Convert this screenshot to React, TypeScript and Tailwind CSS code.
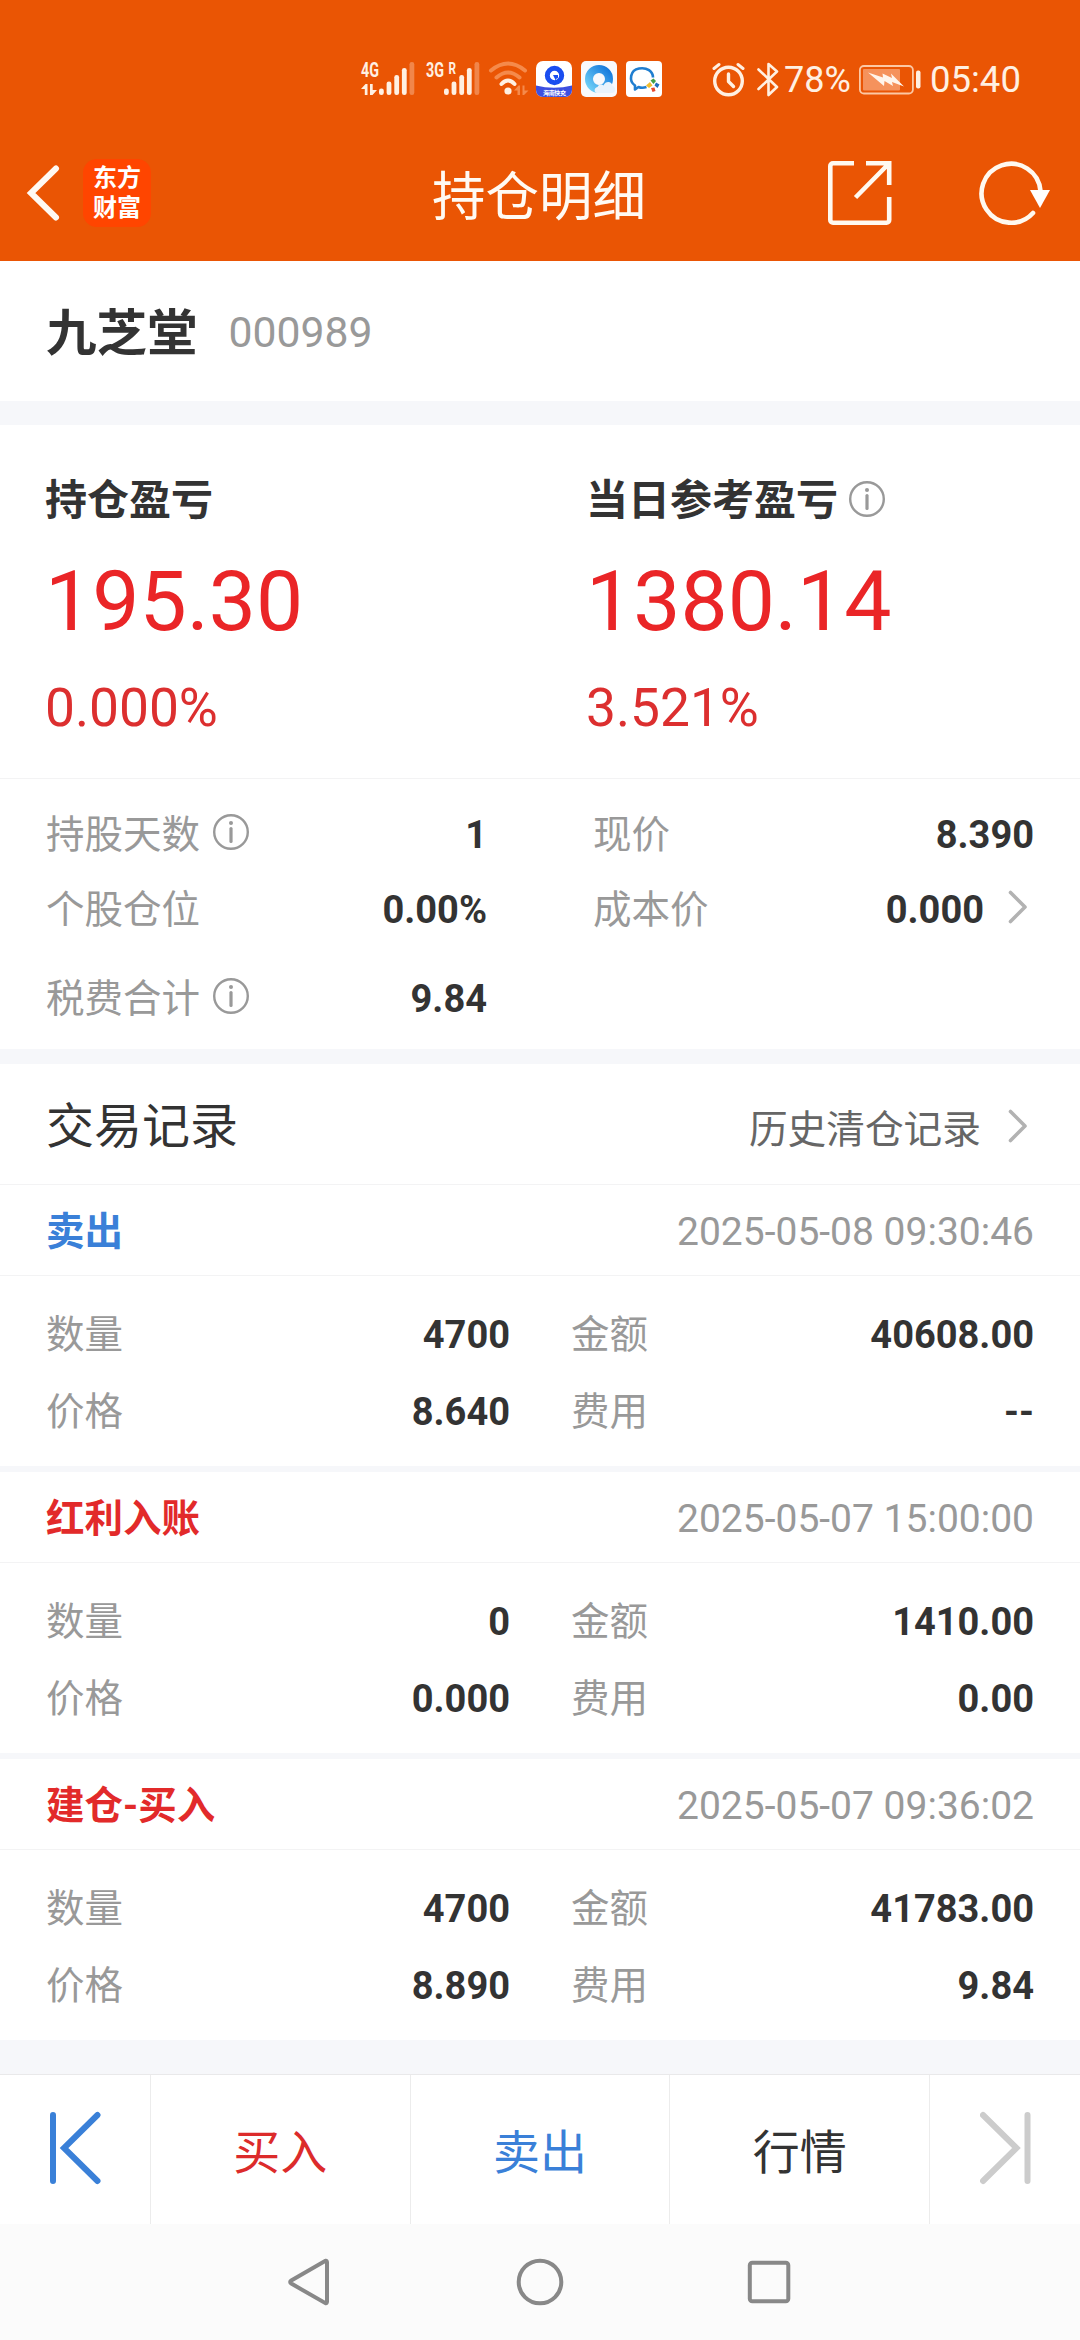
import React from 'react';

interface TradeRecord {
  id: number;
  type: string;
  color: string;
  time: string;
  quantity: string;
  amount: string;
  price: string;
  fee: string;
}

const records: TradeRecord[] = [
  {
    id: 1,
    type: '卖出',
    color: 'text-[#3a80d8]',
    time: '2025-05-08 09:30:46',
    quantity: '4700',
    amount: '40608.00',
    price: '8.640',
    fee: '--',
  },
  {
    id: 2,
    type: '红利入账',
    color: 'text-[#e22a2a]',
    time: '2025-05-07 15:00:00',
    quantity: '0',
    amount: '1410.00',
    price: '0.000',
    fee: '0.00',
  },
  {
    id: 3,
    type: '建仓-买入',
    color: 'text-[#e22a2a]',
    time: '2025-05-07 09:36:02',
    quantity: '4700',
    amount: '41783.00',
    price: '8.890',
    fee: '9.84',
  },
];

function InfoIcon() {
  return (
    <svg className="w-9 h-9 shrink-0" viewBox="0 0 36 36" fill="none">
      <circle cx="18" cy="18" r="16.8" stroke="#999" strokeWidth="2.4" />
      <circle cx="18" cy="9" r="2" fill="#999" />
      <path d="M18 14.5v13" stroke="#999" strokeWidth="3.2" strokeLinecap="round" />
    </svg>
  );
}

function ChevronRight() {
  return (
    <svg className="w-[20px] h-[34px] shrink-0" viewBox="0 0 20 34" fill="none">
      <path d="M2.5 2.5 17 17 2.5 31.5" stroke="#b2b2b2" strokeWidth="3.6" strokeLinecap="round" strokeLinejoin="round" />
    </svg>
  );
}

function SignalIcon({ label, roaming }: { label: string; roaming?: boolean }) {
  return (
    <svg className="w-[54px] h-9 shrink-0 overflow-visible" viewBox="0 0 54 36" fill="#fff0e2">
      <text x="0" y="16" fontSize="20.5" fontWeight="700" textLength="18" lengthAdjust="spacingAndGlyphs">{label}</text>
      {roaming ? (
        <text x="22.5" y="13" fontSize="16" fontWeight="700" textLength="7.5" lengthAdjust="spacingAndGlyphs">R</text>
      ) : (
        <path d="M0 28 4.500 23H6.500V34H3.800V28zM9 23h2.700v6H16L11.500 34H9z" />
      )}
      <rect x="18" y="27.5" width="4.8" height="6.5" rx="2.3" />
      <rect x="25.6" y="20.5" width="4.8" height="13.5" rx="2.3" />
      <rect x="33.3" y="14" width="4.8" height="20" rx="2.3" />
      <rect x="40.9" y="7" width="4.8" height="27" rx="2.3" />
      <rect x="48.5" y="1" width="4.8" height="33" rx="2.3" opacity="0.32" />
    </svg>
  );
}

function StatusBar() {
  return (
    <div className="flex items-center h-[36px] mt-[61px] text-[#fff0e2]">
      <div className="flex items-center pl-[361px]">
        <SignalIcon label="4G" />
        <div className="ml-[11px]">
          <SignalIcon label="3G" roaming />
        </div>
        <svg className="ml-[8px] w-[42px] h-9" viewBox="0 0 42 36" fill="none" strokeLinecap="round">
          <path d="M3 9.5Q20 -4.5 37 9.5" stroke="#f58a4b" strokeWidth="4" />
          <path d="M8.500 16.500Q20 6.500 31.500 16.500" stroke="#f58a4b" strokeWidth="4" />
          <path d="M13.500 23Q20 16 26.500 23" stroke="#fff0e2" strokeWidth="4" />
          <circle cx="20" cy="30" r="3.6" fill="#fff0e2" />
          <path d="M26 29.500 30.500 24.500H32V34H29.500V29.500zM34.500 24.500H36.500V29.500H40.500L36 34H34.500z" fill="#f58a4b" />
        </svg>
        <svg className="ml-[6px] w-9 h-9" viewBox="0 0 36 36">
          <clipPath id="appClip"><rect width="36" height="36" rx="7" /></clipPath>
          <g clipPath="url(#appClip)">
            <rect width="36" height="36" fill="#fff" />
            <path d="M0 24.500Q18 29 36 24.500V36H0z" fill="#3d4fe0" />
            <circle cx="18.5" cy="14.5" r="7.2" fill="none" stroke="#1a4df0" strokeWidth="5" />
            <path d="M17 14h5v3l-2 1v2z" fill="#1a4df0" />
            <text x="7" y="33.6" fontSize="6" fontWeight="700" fill="#fff" textLength="23">海南快充</text>
          </g>
        </svg>
        <svg className="ml-[9px] w-9 h-9" viewBox="0 0 36 36">
          <defs>
            <linearGradient id="ring" x1="0" y1="1" x2="1" y2="0">
              <stop offset="0" stopColor="#6fd0f7" />
              <stop offset="1" stopColor="#1478dc" />
            </linearGradient>
          </defs>
          <rect width="36" height="36" rx="5" fill="#f8f9fc" />
          <circle cx="18" cy="18" r="10" fill="none" stroke="url(#ring)" strokeWidth="8" />
          <path d="M16 32c-3-.5-3.500-5 .5-6 1.500-3 4.500-3 6-1.500 2-5 8.500-4.500 9 .5 4 1 3.500 7-.5 7z" fill="#e9f3fc" />
        </svg>
        <svg className="ml-[9px] w-9 h-9" viewBox="0 0 36 36" fill="none">
          <rect width="36" height="36" rx="4" fill="#fff" />
          <path d="M20.500 26Q16 27.500 12.500 26L9 28.500V24.500C2.500 20 4 9 13 7.500c8-1.500 14 3 14 9" stroke="#1f7ed0" strokeWidth="2.6" strokeLinejoin="round" />
          <path d="M24.500 19.500 27.500 17.500 30 20 27.500 23z" fill="#43a047" />
          <path d="M30 21.500 33.500 23.500 31.500 27 28.500 24.500z" fill="#1f6ec0" />
          <path d="M25 27 28.500 26.500 29.500 30 26.500 31z" fill="#e64a2e" />
          <path d="M20 24.500 24 21 26.500 24.500 23 27z" fill="#f2bd2d" />
        </svg>
      </div>
      <svg className="ml-[50px] w-[34px] h-9" viewBox="0 0 34 36" fill="none" stroke="#fff0e2" strokeLinecap="round">
        <circle cx="16.5" cy="20" r="13.8" strokeWidth="3.4" />
        <path d="M16.500 13v7.500l5 5" strokeWidth="3.400" strokeLinejoin="round" />
        <path d="M2 7.500 7 3.500M31 7.500 26 3.500" strokeWidth="3" />
      </svg>
      <svg className="ml-[10px] w-[24px] h-9" viewBox="0 0 24 36" fill="none" stroke="#fff0e2" strokeWidth="2.6" strokeLinejoin="round" strokeLinecap="round">
        <path d="M2.500 8.500 21 26 12.500 34V3L21 10.500 2.500 28" />
      </svg>
      <span className="ml-[4px] text-[36px] leading-9 w-[66px] pt-[1px]">78%</span>
      <svg className="ml-[9px] w-[62px] h-9" viewBox="0 0 62 36" fill="none">
        <rect x="0.9" y="5" width="53" height="27.5" rx="4" stroke="#fcc8a4" strokeWidth="1.8" />
        <rect x="4" y="8" width="37" height="21.5" rx="1" fill="#f5925c" />
        <path d="M9 11.500 24 16.500 23.500 12.500 33 17 32 12.500 45 25.500 33 21 34 25 25.500 20 25 25z" fill="#fff5ec" />
        <rect x="57" y="9.500" width="4.500" height="18" rx="2" fill="#fff0e2" />
      </svg>
      <span className="ml-[9px] text-[36.5px] leading-9 pt-[1px]">05:40</span>
    </div>
  );
}

function NavHeader() {
  return (
    <header className="flex items-center h-[136px] mt-[28px]">
      <button className="ml-[26px]">
        <svg className="w-[34px] h-[58px]" viewBox="0 0 34 58" fill="none">
          <path d="M30 4.500 5 29 30 53.500" stroke="#fff9f2" strokeWidth="6" strokeLinecap="round" strokeLinejoin="miter" />
        </svg>
      </button>
      <div className="ml-[23px] w-[68px] h-[68px] rounded-[14px] bg-[#ff4500] pt-[2px] text-center text-white text-[24px] leading-[30px] font-bold font-['Noto_Sans_CJK_SC',sans-serif]">
        东方
        <br />
        财富
      </div>
      <h1 className="ml-[281px] mt-[9px] w-[216px] text-[53.5px] leading-[60px] text-[#fffaf3]">持仓明细</h1>
      <button className="ml-[180px]">
        <svg className="w-[64px] h-[64px]" viewBox="0 0 64 64" fill="none" stroke="#fff9f0" strokeWidth="4.6">
          <path d="M26 2.300H5a2.700 2.700 0 0 0-2.700 2.700V59a2.700 2.700 0 0 0 2.700 2.700H58.500a2.700 2.700 0 0 0 2.700-2.700V36" />
          <path d="M38 2.300H61.200V24M61 2.500 27.500 36.500" />
        </svg>
      </button>
      <button className="ml-[86px]">
        <svg className="w-[74px] h-[66px]" viewBox="0 0 74 66" fill="none">
          <path d="M55 53A29.500 29.500 0 1 1 62.500 31" stroke="#fff9f0" strokeWidth="4.600" strokeLinecap="round" />
          <path d="M52 30H72L62 48z" fill="#fff" />
        </svg>
      </button>
    </header>
  );
}

function RecordItem({ record }: { record: TradeRecord }) {
  return (
    <div>
      <div className="h-[91px] pt-[3px] px-[46px] flex items-center justify-between border-b border-[#f3f3f4]">
        <span className={`font-bold ${record.color}`}>{record.type}</span>
        <span className="text-[39px] text-[#999]">{record.time}</span>
      </div>
      <div className="h-[190px] pt-[20px]">
        <div className="h-[77px] flex items-center">
          <div className="w-[510px] pl-[46px] flex justify-between">
            <span className="text-[#999]">数量</span>
            <span className="text-[38px] font-bold">{record.quantity}</span>
          </div>
          <div className="flex-1 pl-[61px] pr-[46px] flex justify-between">
            <span className="text-[#999]">金额</span>
            <span className="text-[38px] font-bold">{record.amount}</span>
          </div>
        </div>
        <div className="h-[77px] flex items-center">
          <div className="w-[510px] pl-[46px] flex justify-between">
            <span className="text-[#999]">价格</span>
            <span className="text-[38px] font-bold">{record.price}</span>
          </div>
          <div className="flex-1 pl-[61px] pr-[46px] flex justify-between">
            <span className="text-[#999]">费用</span>
            <span className="text-[38px] font-bold">{record.fee}</span>
          </div>
        </div>
      </div>
    </div>
  );
}

export default function App() {
  return (
    <div className="w-[1080px] h-[2340px] flex flex-col bg-white overflow-hidden text-[#333] text-[38.5px] leading-[48px] font-['Roboto','Noto_Sans_CJK_SC',sans-serif]">
      {/* Status bar + title bar */}
      <div className="h-[261px] shrink-0 bg-[#ea5504] flow-root">
        <StatusBar />
        <NavHeader />
      </div>

      {/* Stock name */}
      <div className="h-[140px] shrink-0 pl-[46px] pt-[6px] flex items-center">
        <span className="text-[50.5px] font-bold leading-[60px]">九芝堂</span>
        <span className="ml-[31px] mb-[4px] text-[42.7px] text-[#999]">000989</span>
      </div>
      <div className="h-[24px] shrink-0 bg-[#f6f7fa]" />

      {/* Profit and loss */}
      <div className="h-[354px] shrink-0 pt-[46px] grid grid-cols-2 border-b border-[#f3f3f4]">
        <div className="pl-[45px]">
          <div className="h-[60px] flex items-center text-[42px] font-bold">持仓盈亏</div>
          <div className="mt-[21px] text-[84px] leading-[100px] text-[#ea2527]">195.30</div>
          <div className="mt-[26px] text-[53.3px] leading-[60px] text-[#dc2f2f]">0.000%</div>
        </div>
        <div className="pl-[46px]">
          <div className="h-[60px] flex items-center text-[42px] font-bold">
            当日参考盈亏
            <div className="ml-[11px] mb-[5px]">
              <InfoIcon />
            </div>
          </div>
          <div className="mt-[21px] text-[84px] leading-[100px] text-[#ea2527]">1380.14</div>
          <div className="mt-[26px] text-[53.3px] leading-[60px] text-[#dc2f2f]">3.521%</div>
        </div>
      </div>

      {/* Position details */}
      <div className="h-[270px] shrink-0 pt-[18px]">
        <div className="h-[75px] flex items-center">
          <div className="w-[487px] pl-[46px] flex items-center">
            <span className="text-[#999]">持股天数</span>
            <div className="ml-[13px] mb-[6px]">
              <InfoIcon />
            </div>
            <span className="ml-auto text-[38px] font-bold">1</span>
          </div>
          <div className="flex-1 pl-[106px] pr-[46px] flex items-center justify-between">
            <span className="text-[#999]">现价</span>
            <span className="text-[38px] font-bold">8.390</span>
          </div>
        </div>
        <div className="h-[75px] flex items-center">
          <div className="w-[487px] pl-[46px] flex items-center justify-between">
            <span className="text-[#999]">个股仓位</span>
            <span className="text-[38px] font-bold">0.00%</span>
          </div>
          <div className="flex-1 pl-[106px] pr-[52px] flex items-center">
            <span className="text-[#999]">成本价</span>
            <span className="ml-auto text-[38px] font-bold">0.000</span>
            <div className="ml-[24px] mb-[6px]">
              <ChevronRight />
            </div>
          </div>
        </div>
        <div className="h-[75px] mt-[14px] flex items-center">
          <div className="w-[487px] pl-[46px] flex items-center">
            <span className="text-[#999]">税费合计</span>
            <div className="ml-[13px] mb-[6px]">
              <InfoIcon />
            </div>
            <span className="ml-auto text-[38px] font-bold">9.84</span>
          </div>
        </div>
      </div>
      <div className="h-[15px] shrink-0 bg-[#f6f7fa]" />

      {/* Trade records */}
      <div className="h-[121px] shrink-0 pt-[6px] pl-[46px] pr-[52px] flex items-center border-b border-[#f3f3f4]">
        <h2 className="text-[48px] leading-[60px]">交易记录</h2>
        <span className="ml-auto mt-[6px] text-[38.7px] text-[#666]">历史清仓记录</span>
        <div className="ml-[27px] mb-[2px]">
          <ChevronRight />
        </div>
      </div>
      <div className="shrink-0 flex flex-col gap-[6px] bg-[#f6f7fa]">
        {records.map((record) => (
          <div key={record.id} className="bg-white">
            <RecordItem record={record} />
          </div>
        ))}
      </div>
      <div className="h-[34px] shrink-0 bg-[#f6f7fa]" />

      {/* Bottom actions */}
      <div className="h-[150px] shrink-0 flex border-t border-[#e9e9ea] text-[47px] leading-[56px] divide-x divide-[#ececec]">
        <button className="w-[151px] pl-[50px] pb-[3px] flex items-center">
          <svg className="w-[51px] h-[74px]" viewBox="0 0 51 74" fill="none" stroke="#3a80d8" strokeWidth="6" strokeLinecap="round">
            <path d="M3 4V70M47.500 4 14 37 47.500 70" />
          </svg>
        </button>
        <button className="flex-1 pt-[6px] text-[#dc2b2b]">买入</button>
        <button className="flex-1 pt-[6px] text-[#3a80d8]">卖出</button>
        <button className="flex-1 pt-[6px]">行情</button>
        <button className="w-[150px] pl-[50px] pb-[3px] flex items-center">
          <svg className="w-[51px] h-[74px]" viewBox="0 0 51 74" fill="none" stroke="#ccc" strokeWidth="6" strokeLinecap="round">
            <path d="M47.500 4V70M3 4 36.500 37 3 70" />
          </svg>
        </button>
      </div>

      {/* System navigation */}
      <div className="flex-1 bg-[#fbfbfb] flex items-center pl-[287px]">
        <svg className="w-[44px] h-[50px]" viewBox="0 0 44 50" fill="none">
          <path d="M38.500 3.800 4.300 23.400Q2 25 4.300 26.600L38.500 46.200Q40 46.500 40 44.500V5.500Q40 3.500 38.500 3.800z" stroke="#888" strokeWidth="4" />
        </svg>
        <svg className="ml-[184px] w-[50px] h-[50px]" viewBox="0 0 50 50" fill="none">
          <circle cx="25" cy="25" r="21.3" stroke="#888" strokeWidth="4" />
        </svg>
        <svg className="ml-[181px] w-[46px] h-[46px]" viewBox="0 0 46 46" fill="none">
          <rect x="3.8" y="3.8" width="38.5" height="38.5" rx="2.5" stroke="#888" strokeWidth="4" />
        </svg>
      </div>
    </div>
  );
}
